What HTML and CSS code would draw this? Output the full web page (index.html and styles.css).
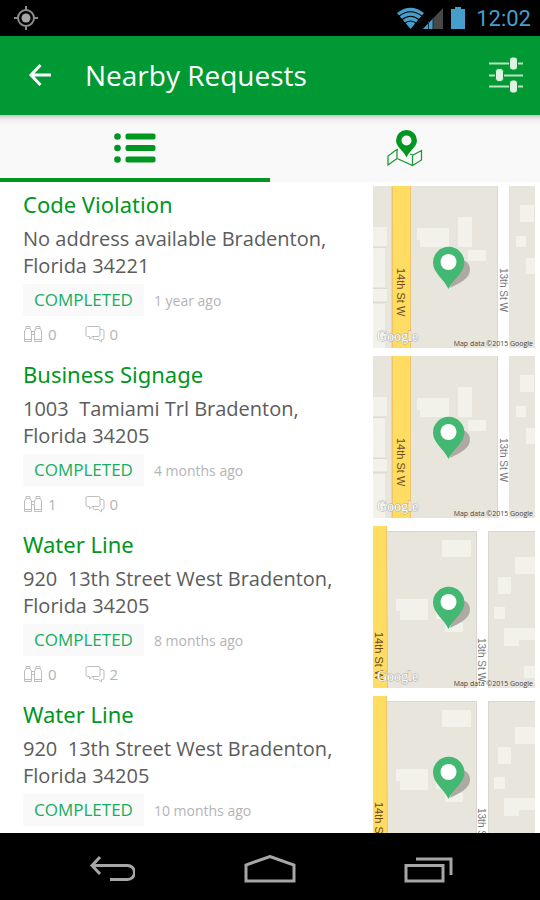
FILE: index.html
```
<!DOCTYPE html>
<html lang="en">
<head>
  <meta charset="UTF-8">
  <meta name="viewport" content="width=device-width, initial-scale=1.0">
  <title>Nearby Requests</title>
  <link rel="stylesheet" href="styles.css">
</head>
<body>
  <!-- Shared drawings -->
  <svg class="sprites" aria-hidden="true">
    <symbol id="binoculars" viewBox="0 0 20 18">
      <path d="M1.500 16.500V6L3 3.500V1.500h4V3.500L8.500 6v10.500zM11.500 16.500V6L13 3.500V1.500h4V3.500L18.500 6v10.500zM8.500 6.500h3M8.500 9.500h3M3 3.500h4M13 3.500h4M1.500 14.500h7M11.500 14.500h7" />
    </symbol>
    <symbol id="comments" viewBox="0 0 20 18">
      <path d="M2.500 1.500h11q1.500 0 1.500 1.500v7q0 1.500-1.500 1.500H7L4.500 14v-2.500h-2Q1 11.500 1 10V3q0-1.500 1.500-1.500zM15 4.500h2.500q1.500 0 1.500 1.500v7q0 1.500-1.500 1.500h-1V17L13.500 14.500H9.500q-1.500 0-1.500-1.500v-1.500" />
    </symbol>
    <symbol id="pin" viewBox="0 0 162 162">
      <path d="M77 102C87 97 97 92 97 84C97 77 92 74 86 73z" fill="#aeaaa3" />
      <path d="M75.500 103C71 93 60 87 60 76.500a15.700 15.700 0 0 1 31.400 0C91.400 87 80 93 75.500 103z" fill="#42b872" />
      <circle cx="75.500" cy="76" r="8" fill="#fff" />
    </symbol>
    <symbol id="map-14th" viewBox="0 0 162 162">
      <path d="M0 0h162v162H0z" fill="#e7e5dc" />
      <path d="M0 41h14v19H0zM0 62h12v39H0zM0 103h14v12H0zM0 118h12v44H0zM44 42h32v19H47v-7h-3zM85 31h14v30H85zM95 64h18v11H95zM147 19h14v17h-14zM143 50h10v11h-10zM153 72h9v16h-9z" fill="#f2f1ea" />
      <path d="M0 61.500h13M0 102.500h14M0 116.500h14" stroke="#dddbd2" fill="none" />
      <path d="M18.500 0v162M124.500 0v162" stroke="#d9d7ce" fill="none" />
      <path d="M19 0h19v162H19z" fill="#f1c36a" />
      <path d="M20 0h17v162H20z" fill="#ffdc62" />
      <path d="M125 0h11v162h-11z" fill="#fff" />
      <use href="#pin" />
    </symbol>
    <symbol id="map-13th" viewBox="0 0 162 162">
      <path d="M0 0h162v162H0z" fill="#fff" />
      <path d="M14 5h89l1 157H14zM115 5h47v157h-47z" fill="#e7e5dc" />
      <path d="M14 5.500h89M115 5.500h47M103.500 5v157M115.500 5v157" stroke="#d9d7ce" fill="none" />
      <path d="M69 14h29v17H69zM23 73h32v21H27v-9h-4zM63 86h10v7H63zM72 97h18v9H72zM142 31h20v17h-20zM125 51h13v17h-13zM121 81h11v12h-11zM131 102h31v12h-16v6h-15zM151 140h11v12h-11z" fill="#f2f1ea" />
      <path d="M0 0h14l1 162H0z" fill="#f1c36a" />
      <path d="M0 0h13l1 162H0z" fill="#ffdc62" />
      <use href="#pin" />
    </symbol>
  </svg>

  <div class="status-bar">
    <svg class="gps" width="24" height="24" viewBox="0 0 24 24">
      <circle cx="12" cy="12" r="8" fill="none" stroke="#8c8c8c" stroke-width="2" />
      <circle cx="12" cy="12" r="4.500" fill="#a5a5a5" />
      <path d="M12 0v5M12 19v5M0 12h5M19 12h5" stroke="#8c8c8c" stroke-width="2" />
    </svg>
    <svg width="48" height="24" viewBox="0 0 48 24">
      <path d="M1 7Q14.500-3.500 28 7L14.500 23z" fill="#469fca" />
      <path d="M2.500 10.500Q14.500 1 26.500 10.500M5.500 14Q14.500 6.500 23.500 14M8.500 17.500Q14.500 12.500 20.500 17.500" fill="none" stroke="#000" stroke-width="1.200" />
      <path d="M47 2v21H27z" fill="#484848" />
      <path d="M37 12.500V23H27z" fill="#469fca" />
      <path d="M32.500 15v8M37 11v12" stroke="#12303f" />
    </svg>
    <svg width="16" height="24" viewBox="0 0 16 24">
      <path d="M5 1h6v2h4v20H1V3h4z" fill="#469fca" />
    </svg>
    <span class="clock">12:02</span>
  </div>

  <header class="app-bar">
    <button class="icon-button" aria-label="Back">
      <svg width="24" height="24" viewBox="0 0 24 24" fill="none" stroke="#fff" stroke-width="3">
        <path d="M24 12H4M13.500 2L4 12l9.500 10" />
      </svg>
    </button>
    <h1>Nearby Requests</h1>
    <button class="icon-button" aria-label="Filter">
      <svg width="36" height="36" viewBox="0 0 36 36">
        <path d="M1 6.500h34M1 18.500h34M1 29.500h34" stroke="#b9e3c2" stroke-width="2" />
        <g fill="#dcf3e1" stroke="#009933" stroke-width="1">
          <rect x="21.500" y="0" width="8" height="13" rx="3" />
          <rect x="7.500" y="11.500" width="8" height="13" rx="3" />
          <rect x="21.500" y="23" width="8" height="13" rx="3" />
        </g>
      </svg>
    </button>
  </header>

  <nav class="tabs">
    <button class="tab active" aria-label="List">
      <svg width="42" height="30" viewBox="0 0 42 30" fill="#009620">
        <circle cx="3.500" cy="3.500" r="3.300" /><circle cx="3.500" cy="15" r="3.300" /><circle cx="3.500" cy="26.500" r="3.300" />
        <rect x="11.500" y="0.500" width="30" height="6" rx="2" /><rect x="11.500" y="12" width="30" height="6" rx="2" /><rect x="11.500" y="23.500" width="30" height="6" rx="2" />
      </svg>
    </button>
    <button class="tab" aria-label="Map">
      <svg width="36" height="38" viewBox="0 0 36 38">
        <path d="M11 20.500L9 21L1 27v9l9-6.500L25.500 36.500L34.500 31V21.500L26 26l-3-1M10 21v8.500M25.500 26V36" fill="none" stroke="#1d9a3a" stroke-width="1.300" />
        <path fill-rule="evenodd" d="M19.500 28.500C17 22 9 18 9 11.500a10.500 10.500 0 0 1 21 0C30 18 22 22 19.500 28.500zM19.500 6.500a5 5 0 1 0 0 10a5 5 0 1 0 0-10z" fill="#009620" />
      </svg>
    </button>
  </nav>

  <main class="request-list">
    <article class="request">
      <div class="details">
        <h2>Code Violation</h2>
        <p class="address">No address available Bradenton, Florida 34221</p>
        <div class="state"><span class="badge">COMPLETED</span><span class="age">1 year ago</span></div>
        <div class="counts">
          <span><svg><use href="#binoculars" /></svg>0</span>
          <span><svg><use href="#comments" /></svg>0</span>
        </div>
      </div>
      <svg class="map" viewBox="0 0 162 162">
        <use href="#map-14th" />
        <text transform="translate(24 82) rotate(90)" class="street main">14th St W</text>
        <text transform="translate(127 82) rotate(90)" class="street">13th St W</text>
        <text x="4" y="155" class="map-logo">Google</text>
        <text x="160" y="160" class="map-credit">Map data ©2015 Google</text>
      </svg>
    </article>

    <article class="request">
      <div class="details">
        <h2>Business Signage</h2>
        <p class="address">1003&nbsp; Tamiami Trl Bradenton, Florida 34205</p>
        <div class="state"><span class="badge">COMPLETED</span><span class="age">4 months ago</span></div>
        <div class="counts">
          <span><svg><use href="#binoculars" /></svg>1</span>
          <span><svg><use href="#comments" /></svg>0</span>
        </div>
      </div>
      <svg class="map" viewBox="0 0 162 162">
        <use href="#map-14th" />
        <text transform="translate(24 82) rotate(90)" class="street main">14th St W</text>
        <text transform="translate(127 82) rotate(90)" class="street">13th St W</text>
        <text x="4" y="155" class="map-logo">Google</text>
        <text x="160" y="160" class="map-credit">Map data ©2015 Google</text>
      </svg>
    </article>

    <article class="request">
      <div class="details">
        <h2>Water Line</h2>
        <p class="address">920&nbsp; 13th Street West Bradenton, Florida 34205</p>
        <div class="state"><span class="badge">COMPLETED</span><span class="age">8 months ago</span></div>
        <div class="counts">
          <span><svg><use href="#binoculars" /></svg>0</span>
          <span><svg><use href="#comments" /></svg>2</span>
        </div>
      </div>
      <svg class="map" viewBox="0 0 162 162">
        <use href="#map-13th" />
        <text transform="translate(2 106) rotate(90)" class="street main">14th St W</text>
        <text transform="translate(105 112) rotate(90)" class="street">13th St W</text>
        <text x="4" y="155" class="map-logo">Google</text>
        <text x="160" y="160" class="map-credit">Map data ©2015 Google</text>
      </svg>
    </article>

    <article class="request">
      <div class="details">
        <h2>Water Line</h2>
        <p class="address">920&nbsp; 13th Street West Bradenton, Florida 34205</p>
        <div class="state"><span class="badge">COMPLETED</span><span class="age">10 months ago</span></div>
      </div>
      <svg class="map" viewBox="0 0 162 162">
        <use href="#map-13th" />
        <text transform="translate(2 106) rotate(90)" class="street main">14th St W</text>
        <text transform="translate(105 112) rotate(90)" class="street">13th St W</text>
      </svg>
    </article>
  </main>

  <footer class="system-nav">
    <button aria-label="Back">
      <svg width="48" height="28" viewBox="0 0 48 28"><path d="M13 2L5 10.500L13 19M5 10.500H40.500a7 7 0 0 1 0 14H23" /></svg>
    </button>
    <button aria-label="Home">
      <svg width="52" height="28" viewBox="0 0 52 28"><path d="M2 26V10L26 1.500L50 10V26z" /></svg>
    </button>
    <button aria-label="Recent apps">
      <svg width="50" height="28" viewBox="0 0 50 28"><path d="M2 10.500h37V26H2zM12 4h35v16" /></svg>
    </button>
  </footer>
</body>
</html>
```
FILE: styles.css
```
* {
  box-sizing: border-box;
}

body {
  font-family: "Open Sans", "Noto Sans", sans-serif;
  margin: 0;
  height: 100vh;
  display: flex;
  flex-direction: column;
  background-color: #fff;
  overflow: hidden;
}

h1, h2, p {
  margin: 0;
  font-weight: 400;
}

button {
  border: none;
  background: none;
  padding: 0;
  cursor: pointer;
}

svg {
  display: block;
  flex: none;
}

.sprites {
  position: absolute;
  width: 0;
  height: 0;
}

/* Status bar */
.status-bar {
  flex: none;
  height: 36px;
  padding: 0 9px 0 14px;
  display: flex;
  align-items: center;
  gap: 6px;
  background-color: #000;
}

.gps {
  margin-right: auto;
}

.clock {
  font-family: Roboto, sans-serif;
  font-size: 22px;
  color: #469fca;
  margin-left: 4px;
}

/* App bar */
.app-bar {
  flex: none;
  height: 79px;
  padding: 0 16px 2px 27px;
  display: flex;
  align-items: center;
  background-color: #009933;
}

.app-bar h1 {
  flex: 1;
  margin-left: 34px;
  font-size: 28px;
  line-height: 40px;
  color: #fff;
}

/* Tabs */
.tabs {
  flex: none;
  height: 67px;
  display: flex;
  background: linear-gradient(#c4c4c4, #ececec 4px, #f9f9f9 10px);
}

.tab {
  flex: 1;
  padding-top: 3px;
  display: flex;
  align-items: center;
  justify-content: center;
  border-bottom: 4px solid transparent;
}

.tab.active {
  border-bottom-color: #009620;
}

/* Requests */
.request-list {
  flex: 1;
  min-height: 0;
  overflow: hidden;
}

.request {
  height: 170px;
  padding: 4px 5px 4px 23px;
  display: flex;
  justify-content: space-between;
}

.details {
  flex: 1;
  padding-right: 24px;
}

.details h2 {
  font-family: "Noto Sans", sans-serif;
  font-size: 22px;
  line-height: 36px;
  color: #009620;
}

.address {
  margin: 3px 0 5px;
  font-size: 20px;
  line-height: 27px;
  color: #5c5c5c;
}

.state {
  display: flex;
  align-items: center;
  gap: 10px;
}

.badge {
  padding: 0 11px;
  font-size: 17px;
  line-height: 32px;
  color: #17ad62;
  background-color: #f9f9f9;
}

.age {
  font-size: 14px;
  line-height: 20px;
  padding-top: 2px;
  color: #b4b4b4;
}

.counts {
  margin-top: 7px;
  display: flex;
  gap: 28px;
  font-size: 15px;
  line-height: 22px;
  color: #b4b4b4;
}

.counts span {
  display: flex;
  align-items: center;
  gap: 5px;
}

.counts svg {
  width: 20px;
  height: 18px;
  fill: none;
  stroke: #bdbdbd;
  stroke-width: 1;
}

.map {
  width: 162px;
  height: 162px;
}

.street {
  font-family: "Liberation Sans", Arial, sans-serif;
  font-size: 10px;
  fill: #777;
}

.street.main {
  font-size: 11px;
  fill: #6b4a1c;
}

.map-logo {
  font-family: "Liberation Serif", serif;
  font-size: 14px;
  fill: #fff;
  stroke: #b0aea8;
  stroke-width: 1px;
  paint-order: stroke;
}

.map-credit {
  font-size: 7px;
  text-anchor: end;
  fill: #444;
}

/* System navigation */
.system-nav {
  flex: none;
  height: 67px;
  padding: 5px 32px 0;
  display: flex;
  align-items: center;
  background-color: #000;
}

.system-nav button {
  flex: 1;
  display: flex;
  justify-content: center;
}

.system-nav svg {
  fill: none;
  stroke: #a6a6a6;
  stroke-width: 3;
}
```
